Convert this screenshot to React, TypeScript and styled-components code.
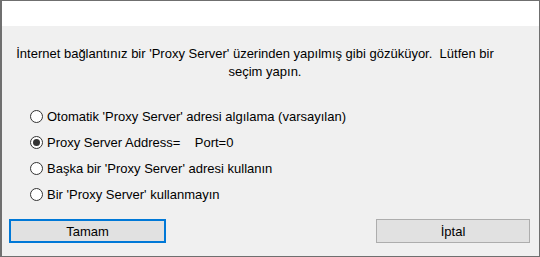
import React from 'react'
import styled, { createGlobalStyle } from 'styled-components'

const Global = createGlobalStyle`
  html, body { margin: 0; padding: 0; background: #f0f0f0; }
  * { box-sizing: border-box; }
`

const options = [
  { label: "Otomatik 'Proxy Server' adresi algılama (varsayılan)", checked: false },
  { label: 'Proxy Server Address=\u00a0\u00a0\u00a0\u00a0Port=0', checked: true },
  { label: "Başka bir 'Proxy Server' adresi kullanın", checked: false },
  { label: "Bir 'Proxy Server' kullanmayın", checked: false },
]

const App = () => {
  return (
    <Window>
      <Global />
      <TitleBar />
      <Body>
        <Message>
          <Line>İnternet bağlantınız bir 'Proxy Server' üzerinden yapılmış gibi gözüküyor.&nbsp; Lütfen bir</Line>
          <Line $shift={20}>seçim yapın.</Line>
        </Message>
        <Options>
          {options.map((o) => (
            <Row key={o.label}>
              <Radio checked={o.checked} />
              <Label>{o.label}</Label>
            </Row>
          ))}
        </Options>
        <Buttons>
          <Button primary>Tamam</Button>
          <Button>İptal</Button>
        </Buttons>
      </Body>
    </Window>
  )
}

export default App

const Window = styled.div`
  width: 540px;
  height: 257px;
  border: 1px solid #6f6f6f;
  border-left: 2px solid #6f6f6f;
  background: #f0f0f0;
  display: flex;
  flex-direction: column;
  font-family: 'Liberation Sans', Arial, sans-serif;
  font-size: 13px;
  color: #000;
`
const TitleBar = styled.div`
  height: 25px;
  background: #ffffff;
`
const Body = styled.div`
  flex: 1;
  display: flex;
  flex-direction: column;
  padding: 19px 9px 0 7px;
`
const Message = styled.div`
  display: flex;
  flex-direction: column;
  padding-right: 29px;
  line-height: 18px;
`
const Line = styled.div<{ $shift?: number }>`
  text-align: center;
  white-space: nowrap;
  padding-left: ${(p) => p.$shift ?? 0}px;
`
const Options = styled.div`
  display: flex;
  flex-direction: column;
  margin-top: 22px;
  padding-left: 21px;
`
const Row = styled.div`
  height: 26px;
  display: flex;
  align-items: center;
`
const Radio = styled.span<{ checked?: boolean }>`
  width: 13px;
  height: 13px;
  border-radius: 50%;
  border: 1px solid #333;
  background: #fff;
  margin-right: 4px;
  display: flex;
  align-items: center;
  justify-content: center;
  &::after {
    content: '';
    display: ${(p) => (p.checked ? 'block' : 'none')};
    width: 7px;
    height: 7px;
    border-radius: 50%;
    background: #333;
  }
`
const Label = styled.span`
  white-space: pre;
`
const Buttons = styled.div`
  display: flex;
  justify-content: space-between;
  margin-top: 12px;
`
const Button = styled.div<{ primary?: boolean }>`
  height: 24px;
  width: ${(p) => (p.primary ? '157px' : '154px')};
  display: flex;
  align-items: center;
  justify-content: center;
  background: #e1e1e1;
  border: ${(p) => (p.primary ? '2px solid #0078d7' : '1px solid #adadad')};
`
